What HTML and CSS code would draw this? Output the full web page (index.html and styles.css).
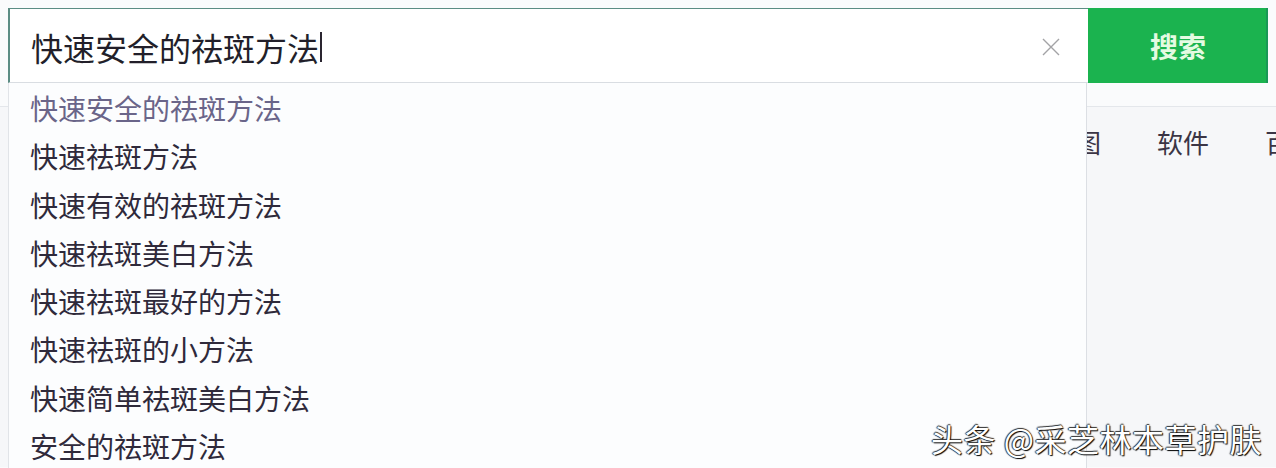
FILE: index.html
```html
<!DOCTYPE html>
<html lang="zh-CN">
  <head>
    <meta charset="UTF-8" />
    <meta name="viewport" content="width=device-width, initial-scale=1.0" />
    <title>搜索</title>
    <link rel="stylesheet" href="styles.css">
  </head>
  <body>
    <div id="page">
      <div class="search-row">
        <div class="search-input">
          <span class="query">快速安全的祛斑方法</span>
          <span class="caret"></span>
          <svg class="clear" width="18" height="18" viewBox="0 0 18 18">
            <path d="M1 1 L17 17 M17 1 L1 17" stroke="#a3a3a6" stroke-width="1.4" fill="none" />
          </svg>
        </div>
        <div class="search-btn">搜索</div>
      </div>

      <div class="tabs">
        <span class="tab">网页</span>
        <span class="tab">资讯</span>
        <span class="tab">视频</span>
        <span class="tab">图片</span>
        <span class="tab">良医</span>
        <span class="tab">地图</span>
        <span class="tab">软件</span>
        <span class="tab">百科</span>
      </div>

      <ul class="suggest">
        <li class="item current">快速安全的祛斑方法</li>
        <li class="item">快速祛斑方法</li>
        <li class="item">快速有效的祛斑方法</li>
        <li class="item">快速祛斑美白方法</li>
        <li class="item">快速祛斑最好的方法</li>
        <li class="item">快速祛斑的小方法</li>
        <li class="item">快速简单祛斑美白方法</li>
        <li class="item">安全的祛斑方法</li>
      </ul>

      <div class="watermark">头条 @采芝林本草护肤</div>
    </div>
  </body>
</html>
```

FILE: styles.css
```css
body {
  margin: 0;
  padding: 0;
  overflow: hidden;
  background: #fafbfc;
  font-family: "Noto Sans CJK SC", "Noto Sans", sans-serif;
}

#page {
  position: relative;
  width: 1276px;
  height: 468px;
  box-sizing: border-box;
  padding-top: 8px;
  overflow: hidden;
}

.search-row {
  display: flex;
  height: 75px;
  margin-left: 8px;
}

.search-input {
  width: 1080px;
  box-sizing: border-box;
  display: flex;
  align-items: center;
  padding: 2px 28px 0 21px;
  background: #ffffff;
  border-top: 1px solid #5c8d84;
  border-left: 2px solid #5c8d84;
  border-bottom: 1px solid #d9dde2;
}

.query {
  font-size: 32px;
  color: #221f2a;
}

.caret {
  width: 2px;
  height: 30px;
  margin-left: 1px;
  background: #2a2530;
}

.clear {
  margin-left: auto;
}

.search-btn {
  width: 180px;
  box-sizing: border-box;
  display: flex;
  align-items: center;
  justify-content: center;
  background: #1bb34f;
  border-right: 2px solid #1a9857;
  color: #e4fbe2;
  font-size: 28px;
  font-weight: bold;
  padding-left: 2px;
}

.tabs {
  display: flex;
  gap: 56px;
  margin-top: 23px;
  padding: 20px 0 0 509px;
  height: 340px;
  border-top: 1px solid #e4e7eb;
  background: #f6f7f9;
  white-space: nowrap;
}

.tab {
  font-size: 26px;
  line-height: 30px;
  color: #3b3545;
}

.suggest {
  position: absolute;
  left: 8px;
  top: 83px;
  width: 1079px;
  height: 400px;
  box-sizing: border-box;
  margin: 0;
  padding: 1px 0 0 21px;
  list-style: none;
  background: #fcfdfe;
  border-left: 1px solid #e1e4e8;
  border-right: 1px solid #dcdfe4;
}

.item {
  height: 48.3px;
  line-height: 48px;
  font-size: 28px;
  color: #2f2a3b;
}

.item.current {
  color: #6a6589;
}

.watermark {
  position: absolute;
  right: 14px;
  bottom: 13px;
  font-size: 32px;
  line-height: 34px;
  color: #ffffff;
  text-shadow: 1px 1px 1px #000, -1px 0 1px #333, 0 -1px 1px #333;
  letter-spacing: 0.5px;
}
```
